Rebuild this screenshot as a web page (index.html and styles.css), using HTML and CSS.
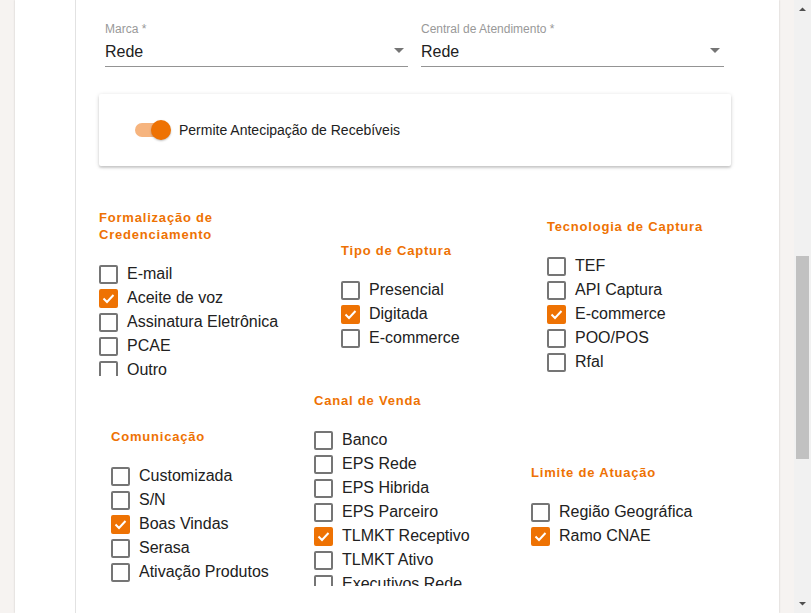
FILE: index.html
```html
<!DOCTYPE html>
<html lang="pt-BR">
<head>
<meta charset="utf-8">
<title>Credenciamento</title>
<link rel="stylesheet" href="styles.css">
</head>
<body>
<div class="app">
  <div class="gutter"></div>
  <main class="sheet">
    <div class="content">
      <div class="fields">
        <div class="field">
          <label class="field-label">Marca *</label>
          <div class="select"><span>Rede</span><svg class="caret" width="10" height="5" viewBox="0 0 10 5"><path d="M0 0h10L5 5z" fill="#757575"/></svg></div>
        </div>
        <div class="field">
          <label class="field-label">Central de Atendimento *</label>
          <div class="select"><span>Rede</span><svg class="caret" width="10" height="5" viewBox="0 0 10 5"><path d="M0 0h10L5 5z" fill="#757575"/></svg></div>
        </div>
      </div>

      <section class="card">
        <span class="switch"><span class="track"></span><span class="thumb"></span></span>
        <span class="switch-label">Permite Antecipação de Recebíveis</span>
      </section>

      <div class="groups row1">
        <div class="group g1">
          <h3 class="group-title narrow">Formalização de Credenciamento</h3>
          <ul class="list clip1">
            <li class="item"><span class="box"></span>E-mail</li>
            <li class="item"><span class="box on"><svg width="19" height="19" viewBox="0 0 19 19"><path d="M4.5 9.5l3.5 3.5 6.5-7" fill="none" stroke="#fff" stroke-width="2"/></svg></span>Aceite de voz</li>
            <li class="item"><span class="box"></span>Assinatura Eletrônica</li>
            <li class="item"><span class="box"></span>PCAE</li>
            <li class="item"><span class="box"></span>Outro</li>
          </ul>
        </div>
        <div class="group g2">
          <h3 class="group-title">Tipo de Captura</h3>
          <ul class="list">
            <li class="item"><span class="box"></span>Presencial</li>
            <li class="item"><span class="box on"><svg width="19" height="19" viewBox="0 0 19 19"><path d="M4.5 9.5l3.5 3.5 6.5-7" fill="none" stroke="#fff" stroke-width="2"/></svg></span>Digitada</li>
            <li class="item"><span class="box"></span>E-commerce</li>
          </ul>
        </div>
        <div class="group g3">
          <h3 class="group-title">Tecnologia de Captura</h3>
          <ul class="list">
            <li class="item"><span class="box"></span>TEF</li>
            <li class="item"><span class="box"></span>API Captura</li>
            <li class="item"><span class="box on"><svg width="19" height="19" viewBox="0 0 19 19"><path d="M4.5 9.5l3.5 3.5 6.5-7" fill="none" stroke="#fff" stroke-width="2"/></svg></span>E-commerce</li>
            <li class="item"><span class="box"></span>POO/POS</li>
            <li class="item"><span class="box"></span>Rfal</li>
          </ul>
        </div>
      </div>

      <div class="groups row2">
        <div class="group g1">
          <h3 class="group-title">Comunicação</h3>
          <ul class="list">
            <li class="item"><span class="box"></span>Customizada</li>
            <li class="item"><span class="box"></span>S/N</li>
            <li class="item"><span class="box on"><svg width="19" height="19" viewBox="0 0 19 19"><path d="M4.5 9.5l3.5 3.5 6.5-7" fill="none" stroke="#fff" stroke-width="2"/></svg></span>Boas Vindas</li>
            <li class="item"><span class="box"></span>Serasa</li>
            <li class="item"><span class="box"></span>Ativação Produtos</li>
          </ul>
        </div>
        <div class="group g2">
          <h3 class="group-title">Canal de Venda</h3>
          <ul class="list clip2">
            <li class="item"><span class="box"></span>Banco</li>
            <li class="item"><span class="box"></span>EPS Rede</li>
            <li class="item"><span class="box"></span>EPS Hibrida</li>
            <li class="item"><span class="box"></span>EPS Parceiro</li>
            <li class="item"><span class="box on"><svg width="19" height="19" viewBox="0 0 19 19"><path d="M4.5 9.5l3.5 3.5 6.5-7" fill="none" stroke="#fff" stroke-width="2"/></svg></span>TLMKT Receptivo</li>
            <li class="item"><span class="box"></span>TLMKT Ativo</li>
            <li class="item"><span class="box"></span>Executivos Rede</li>
          </ul>
        </div>
        <div class="group g3">
          <h3 class="group-title">Limite de Atuação</h3>
          <ul class="list">
            <li class="item"><span class="box"></span>Região Geográfica</li>
            <li class="item"><span class="box on"><svg width="19" height="19" viewBox="0 0 19 19"><path d="M4.5 9.5l3.5 3.5 6.5-7" fill="none" stroke="#fff" stroke-width="2"/></svg></span>Ramo CNAE</li>
          </ul>
        </div>
      </div>
    </div>
  </main>
  <div class="gutter"></div>
  <div class="scrollbar">
    <svg class="sb-arrow" width="17" height="17" viewBox="0 0 17 17"><path d="M5 11h7L8.5 7.5z" fill="#505050"/></svg>
    <div class="sb-track"><div class="sb-thumb"></div></div>
    <svg class="sb-arrow" width="17" height="17" viewBox="0 0 17 17"><path d="M5 6h7L8.5 9.5z" fill="#505050"/></svg>
  </div>
</div>
</body>
</html>
```

FILE: styles.css
```css
* { box-sizing: border-box; }
html, body { margin: 0; padding: 0; }
body {
  font-family: "Liberation Sans", Arial, sans-serif;
  color: #212121;
  background: #f5f2f0;
  overflow: hidden;
}
.app {
  display: flex;
  width: 811px;
  height: 613px;
  overflow: hidden;
}
.gutter {
  width: 15px;
  flex: none;
  background: #f6f3f1;
}
.sheet {
  flex: 1;
  background: #fff;
  box-shadow: 0 0 2px rgba(0,0,0,0.18);
  position: relative;
  z-index: 1;
  overflow: hidden;
}
.content {
  margin-left: 60px;
  height: 100%;
  border-left: 1px solid #e2e2e2;
  padding: 22px 48px 0 23px;
}

/* select fields */
.fields {
  display: flex;
  gap: 13px;
  margin: 0 7px 0 6px;
}
.field { flex: 1; display: flex; flex-direction: column; }
.field-label {
  font-size: 12px;
  line-height: 14px;
  color: #999;
}
.select {
  margin-top: 6px;
  font-size: 16px;
  line-height: 19px;
  padding-bottom: 5px;
  border-bottom: 1px solid #949494;
  display: flex;
  align-items: center;
  justify-content: space-between;
  padding-right: 4px;
}
.caret { display: block; margin-top: -2px; }

/* card with switch */
.card {
  margin-top: 27px;
  height: 72px;
  background: #fff;
  border-radius: 2px;
  box-shadow: 0 1px 4px rgba(0,0,0,0.16), 0 2px 2px rgba(0,0,0,0.12);
  display: flex;
  align-items: center;
  padding-left: 36px;
}
.switch {
  position: relative;
  width: 36px;
  height: 20px;
  margin-right: 8px;
}
.track {
  position: absolute;
  left: 0;
  top: 3px;
  width: 32px;
  height: 14px;
  border-radius: 7px;
  background: #f6b47e;
}
.thumb {
  position: absolute;
  left: 16px;
  top: 0;
  width: 20px;
  height: 20px;
  border-radius: 50%;
  background: #ee7203;
  box-shadow: 0 1px 2px rgba(0,0,0,0.25);
}
.switch-label { font-size: 14px; }

/* checkbox groups */
.groups {
  display: flex;
  align-items: flex-start;
}
.row1 { margin-top: 43px; }
.row2 { margin-top: 16px; padding-left: 12px; }
.row1 .g1 { width: 242px; }
.row1 .g2 { width: 206px; margin-top: 33px; }
.row1 .g3 { margin-top: 9px; }
.row2 .g1 { width: 203px; margin-top: 36px; }
.row2 .g2 { width: 217px; }
.row2 .g3 { margin-top: 72px; }

.group-title {
  margin: 0 0 19px;
  font-size: 13px;
  line-height: 17px;
  font-weight: bold;
  letter-spacing: 0.8px;
  color: #ee7203;
}
.group-title.narrow { max-width: 130px; }
.list {
  list-style: none;
  margin: 0;
  padding: 0;
}
.clip1 { max-height: 114px; overflow: hidden; }
.clip2 { max-height: 158px; overflow: hidden; }
.item {
  display: flex;
  align-items: center;
  gap: 9px;
  height: 24px;
  font-size: 16px;
  white-space: nowrap;
}
.box {
  flex: none;
  width: 19px;
  height: 19px;
  border: 2px solid #757575;
  border-radius: 2px;
  position: relative;
}
.box.on {
  background: #ee7203;
  border-color: #ee7203;
}
.box.on svg { position: absolute; left: -2px; top: -2px; }

/* scrollbar */
.scrollbar {
  width: 17px;
  flex: none;
  background: #f1f1f1;
  display: flex;
  flex-direction: column;
}
.sb-arrow { display: block; flex: none; }
.sb-track { flex: 1; padding: 239px 2px 0; }
.sb-thumb { height: 203px; background: #c1c1c1; }
```
